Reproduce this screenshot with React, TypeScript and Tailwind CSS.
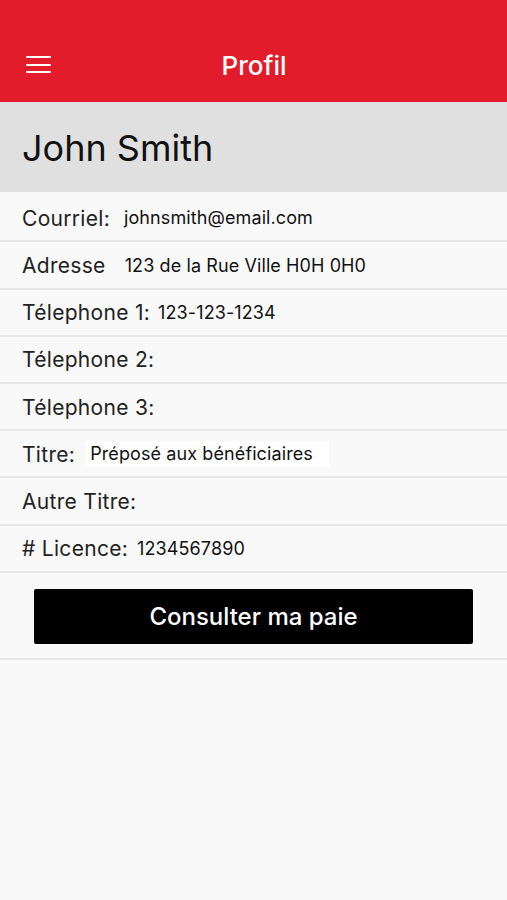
import React from "react";

const rows: { label: string; value?: string; gap: number; boxed?: boolean }[] = [
  { label: "Courriel:", value: "johnsmith@email.com", gap: 14 },
  { label: "Adresse", value: "123 de la Rue Ville H0H 0H0", gap: 19 },
  { label: "Télephone 1:", value: "123-123-1234", gap: 8 },
  { label: "Télephone 2:", gap: 8 },
  { label: "Télephone 3:", gap: 8 },
  { label: "Titre:", value: "Préposé aux bénéficiaires", gap: 10, boxed: true },
  { label: "Autre Titre:", gap: 8 },
  { label: "# Licence:", value: "1234567890", gap: 9 },
];

export default function App() {
  return (
    <div
      className="w-[507px] h-[900px] bg-[#f9f9f9] flex flex-col"
      style={{ fontFamily: "Inter, Roboto, 'Noto Sans', sans-serif" }}
    >
      <div className="h-[102px] bg-[#e31c2b] flex items-end pb-[21px] relative">
        <div className="absolute left-[26px] top-[56px] w-[25px] flex flex-col gap-[5.5px]">
          <div className="h-[2px] bg-white rounded-[1px]" />
          <div className="h-[2px] bg-white rounded-[1px]" />
          <div className="h-[2px] bg-white rounded-[1px]" />
        </div>
        <div className="w-full text-center text-white text-[26px] font-medium leading-[30px] pl-[1px]">
          Profil
        </div>
      </div>
      <div className="h-[90px] bg-[#e0e0e0] flex items-center px-[22px]">
        <span className="text-[36px] text-[#111] leading-none mt-[2px]">John Smith</span>
      </div>
      <div className="h-[3.3px]" />
      {rows.map((r) => (
        <div
          key={r.label}
          className="h-[47.2px] border-b-[2px] border-[#e6e6e6] flex items-center px-[22px] box-border pt-[1px]"
        >
          <span className="text-[21px] tracking-[0.3px] text-[#222] leading-none">{r.label}</span>
          {r.value && (
            <span
              className={
                "text-[18px] tracking-[0.1px] text-[#111] leading-none " +
                (r.boxed ? "bg-white py-[4px] pl-[5px] w-[244px]" : "")
              }
              style={{ marginLeft: r.gap }}
            >
              {r.value}
            </span>
          )}
        </div>
      ))}
      <div className="h-[87px] border-b-[2px] border-[#e6e6e6] flex items-center justify-center box-border pt-[3px]">
        <button className="w-[439px] h-[55px] bg-black rounded-[2px] text-white text-[24px] font-medium leading-none">
          Consulter ma paie
        </button>
      </div>
    </div>
  );
}
